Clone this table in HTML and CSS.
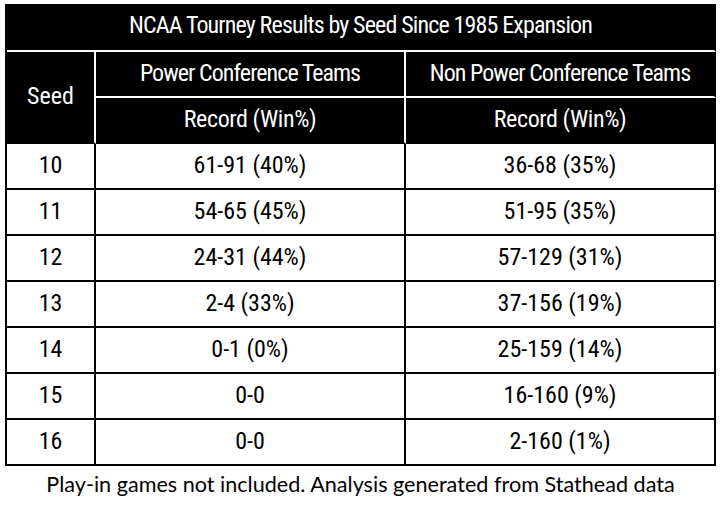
FILE: index.html
```html
<!DOCTYPE html>
<html lang="en">
<head>
<meta charset="utf-8">
<title>NCAA Tourney Results by Seed</title>
<link rel="stylesheet" href="styles.css">
</head>
<body>
<div class="wrap">
  <table class="results">
    <colgroup>
      <col class="c-seed">
      <col class="c-rec">
      <col class="c-rec">
    </colgroup>
    <thead>
      <tr>
        <th class="title" colspan="3">NCAA Tourney Results by Seed Since 1985 Expansion</th>
      </tr>
      <tr>
        <th class="seed-h" rowspan="2">Seed</th>
        <th class="grp">Power Conference Teams</th>
        <th class="grp last">Non Power Conference Teams</th>
      </tr>
      <tr>
        <th class="sub">Record (Win%)</th>
        <th class="sub last">Record (Win%)</th>
      </tr>
    </thead>
    <tbody>
      <tr><td class="seed">10</td><td>61-91 (40%)</td><td>36-68 (35%)</td></tr>
      <tr><td class="seed">11</td><td>54-65 (45%)</td><td>51-95 (35%)</td></tr>
      <tr><td class="seed">12</td><td>24-31 (44%)</td><td>57-129 (31%)</td></tr>
      <tr><td class="seed">13</td><td>2-4 (33%)</td><td>37-156 (19%)</td></tr>
      <tr><td class="seed">14</td><td>0-1 (0%)</td><td>25-159 (14%)</td></tr>
      <tr><td class="seed">15</td><td>0-0</td><td>16-160 (9%)</td></tr>
      <tr><td class="seed">16</td><td>0-0</td><td>2-160 (1%)</td></tr>
    </tbody>
  </table>
  <p class="note">Play-in games not included. Analysis generated from Stathead data</p>
</div>
</body>
</html>
```
FILE: styles.css
```css
html, body {
  margin: 0;
  padding: 0;
  background: #ffffff;
}

.wrap {
  width: 711px;
  padding: 4px 0 0 5px;
}

.results {
  border-collapse: separate;
  border-spacing: 0;
  table-layout: fixed;
  width: 711px;
  border-left: 2px solid #000;
  border-top: 2px solid #000;
  font-family: Roboto, "Open Sans", sans-serif;
  font-stretch: 75%;
  color: #000;
}

.c-seed { width: 89px; }
.c-rec { width: 310px; }

.results th,
.results td {
  box-sizing: border-box;
  height: 46px;
  padding: 0 0 2px;
  text-align: center;
  vertical-align: middle;
  border-right: 2px solid #000;
  border-bottom: 2px solid #000;
  font-size: 24px;
  font-weight: 400;
  line-height: 24px;
  white-space: nowrap;
}

.results th {
  background: #000;
  color: #fff;
  padding-bottom: 3px;
  letter-spacing: -0.95px;
}

.results .title {
  border-bottom-color: #fff;
  padding-bottom: 7px;
  letter-spacing: -0.85px;
}

.results .seed-h {
  border-right-color: #fff;
  letter-spacing: 0;
}

.results .grp {
  border-bottom-color: #fff;
  border-right-color: #fff;
}

.results .sub {
  border-right-color: #fff;
  letter-spacing: -0.4px;
}

.results .last {
  border-right-color: #000;
}

.results td {
  background: #fff;
}

.note {
  margin: 5px 0 0;
  text-align: center;
  font-family: Lato, "Open Sans", sans-serif;
  font-size: 21.6px;
  line-height: 26px;
  color: #000;
}
```
